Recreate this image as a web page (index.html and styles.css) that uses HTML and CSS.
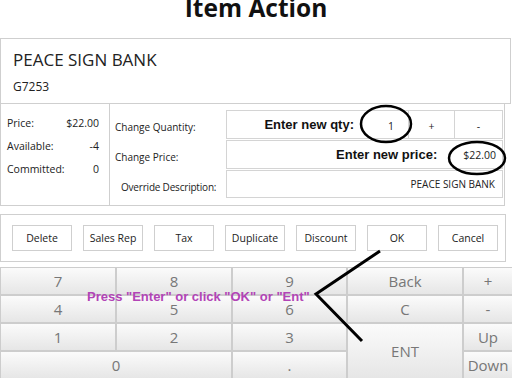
FILE: index.html
```html
<!DOCTYPE html>
<html lang="en">
<head>
  <meta charset="UTF-8">
  <title>Item Action</title>
  <link rel="stylesheet" href="styles.css">
</head>
<body>
  <div class="title">Item Action</div>

  <!-- item en cours -->
  <div class="item-head">
    <div class="item-name">PEACE SIGN BANK</div>
    <div class="item-code">G7253</div>
  </div>

  <div class="details">
    <div class="stock">
      <div class="stock-row"><span>Price:</span><span>$22.00</span></div>
      <div class="stock-row"><span>Available:</span><span>-4</span></div>
      <div class="stock-row"><span>Committed:</span><span>0</span></div>
    </div>

    <div class="changes">
      <div class="change-label">Change Quantity:</div>
      <div class="qty-row">
        <div class="field qty-field"><b>Enter new qty:</b><span class="qty-val">1</span></div>
        <div class="field step">+</div>
        <div class="field step">-</div>
      </div>

      <div class="change-label">Change Price:</div>
      <div class="field price-field"><b>Enter new price:</b><span class="price-val">$22.00</span></div>

      <div class="change-label indent">Override Description:</div>
      <div class="field desc-field">PEACE SIGN BANK</div>
    </div>
  </div>

  <div class="actions">
    <button class="act">Delete</button>
    <button class="act">Sales Rep</button>
    <button class="act">Tax</button>
    <button class="act">Duplicate</button>
    <button class="act">Discount</button>
    <button class="act">OK</button>
    <button class="act">Cancel</button>
  </div>

  <!-- clavier numerique -->
  <div class="keypad">
    <div class="key">7</div>
    <div class="key">8</div>
    <div class="key">9</div>
    <div class="key">Back</div>
    <div class="key">+</div>
    <div class="key">4</div>
    <div class="key">5</div>
    <div class="key">6</div>
    <div class="key">C</div>
    <div class="key">-</div>
    <div class="key">1</div>
    <div class="key">2</div>
    <div class="key">3</div>
    <div class="key ent">ENT</div>
    <div class="key">Up</div>
    <div class="key zero">0</div>
    <div class="key">.</div>
    <div class="key">Down</div>
  </div>

  <!-- annotations -->
  <div class="hint">Press "Enter" or click "OK" or "Ent"</div>
  <svg class="marks" width="512" height="379" viewBox="0 0 512 379">
    <ellipse cx="386" cy="124" rx="25" ry="18" fill="none" stroke="#000" stroke-width="2.5"/>
    <ellipse cx="477" cy="158" rx="28" ry="16" fill="none" stroke="#000" stroke-width="2.5"/>
    <polyline points="380,251 316,294 362,341" fill="none" stroke="#000" stroke-width="3"/>
  </svg>
</body>
</html>
```

FILE: styles.css
```css
body {
  margin: 0;
  width: 512px;
  height: 379px;
  overflow: hidden;
  position: relative;
  font-family: "Open Sans", "Noto Sans", sans-serif;
  color: #222;
  background: #fff;
}

.title {
  font-size: 24.5px;
  font-weight: bold;
  text-align: center;
  line-height: 27px;
  height: 27px;
  margin-top: -6px;
  margin-bottom: 17px;
  color: #111;
}

.item-head {
  width: 511px;
  height: 66px;
  box-sizing: border-box;
  border: 1px solid #cfcfcf;
  padding: 9px 0 0 12px;
}

.item-name {
  font-size: 17px;
  line-height: 24px;
}

.item-code {
  font-size: 12px;
  line-height: 18px;
  margin-top: 6px;
}

.details {
  display: flex;
  height: 102px;
}

.stock {
  width: 110px;
  box-sizing: border-box;
  border: 1px solid #cfcfcf;
  border-top: none;
  padding: 8px 10px 0 6px;
  font-size: 10.5px;
}

.stock-row {
  display: flex;
  justify-content: space-between;
  line-height: 23px;
}

.changes {
  width: 395px;
  box-sizing: border-box;
  border: 1px solid #cfcfcf;
  border-top: none;
  border-left: none;
  display: grid;
  grid-template-columns: 116px 1fr;
  grid-template-rows: 30px 30px 29px;
  padding: 6px 1px 0 0;
  font-size: 10px;
}

.change-label {
  padding-left: 5px;
  padding-top: 4px;
  display: flex;
  align-items: center;
  white-space: nowrap;
}

.change-label.indent {
  padding-left: 11px;
  letter-spacing: -0.2px;
}

.field {
  border: 1px solid #d4d4d4;
  display: flex;
  align-items: center;
  justify-content: flex-end;
  margin: 0 0 1px 0;
}

.field b {
  font-family: "Liberation Sans", Arial, sans-serif;
  font-size: 13px;
  color: #111;
}

.qty-row {
  display: grid;
  grid-template-columns: 1fr 46px 48px;
}

.qty-field b {
  margin-right: 2px;
}

.qty-val {
  width: 38px;
  text-align: right;
  padding-right: 14px;
  font-size: 10.5px;
  padding-top: 3px;
}

.step {
  justify-content: center;
  border-left: none;
  padding-top: 3px;
  font-size: 10.5px;
}

.price-field {
  padding-right: 6px;
}

.price-val {
  margin-left: 26px;
  font-size: 10.5px;
}

.desc-field {
  padding-right: 7px;
}

.actions {
  margin-top: 8px;
  width: 506px;
  height: 48px;
  box-sizing: border-box;
  border: 1px solid #cfcfcf;
  display: flex;
  gap: 11px;
  padding: 10px 0 0 11px;
}

.act {
  width: 60px;
  height: 26px;
  background: #fff;
  border: 1px solid #cfcfcf;
  font-family: "Open Sans", "Noto Sans", sans-serif;
  font-size: 10.5px;
  color: #222;
  padding: 0;
}

.keypad {
  margin-top: 5px;
  display: grid;
  grid-template-columns: 114px 114px 113px 114px 1fr;
  grid-template-rows: repeat(4, 26px);
  gap: 2px;
  background: #cdcdcd;
  padding: 1px 0 0 1px;
}

.key {
  background: linear-gradient(#fbfbfb, #e6e6e6);
  color: #777;
  font-size: 15px;
  display: flex;
  align-items: center;
  justify-content: center;
}

.key.ent {
  grid-row: 3 / 5;
  grid-column: 4;
}

.key.zero {
  grid-column: 1 / 3;
}

.hint {
  position: absolute;
  left: 87px;
  top: 289px;
  font-family: "Liberation Sans", Arial, sans-serif;
  font-weight: bold;
  font-size: 13px;
  color: #b244b6;
}

.marks {
  position: absolute;
  left: 0;
  top: 0;
  pointer-events: none;
}
```
